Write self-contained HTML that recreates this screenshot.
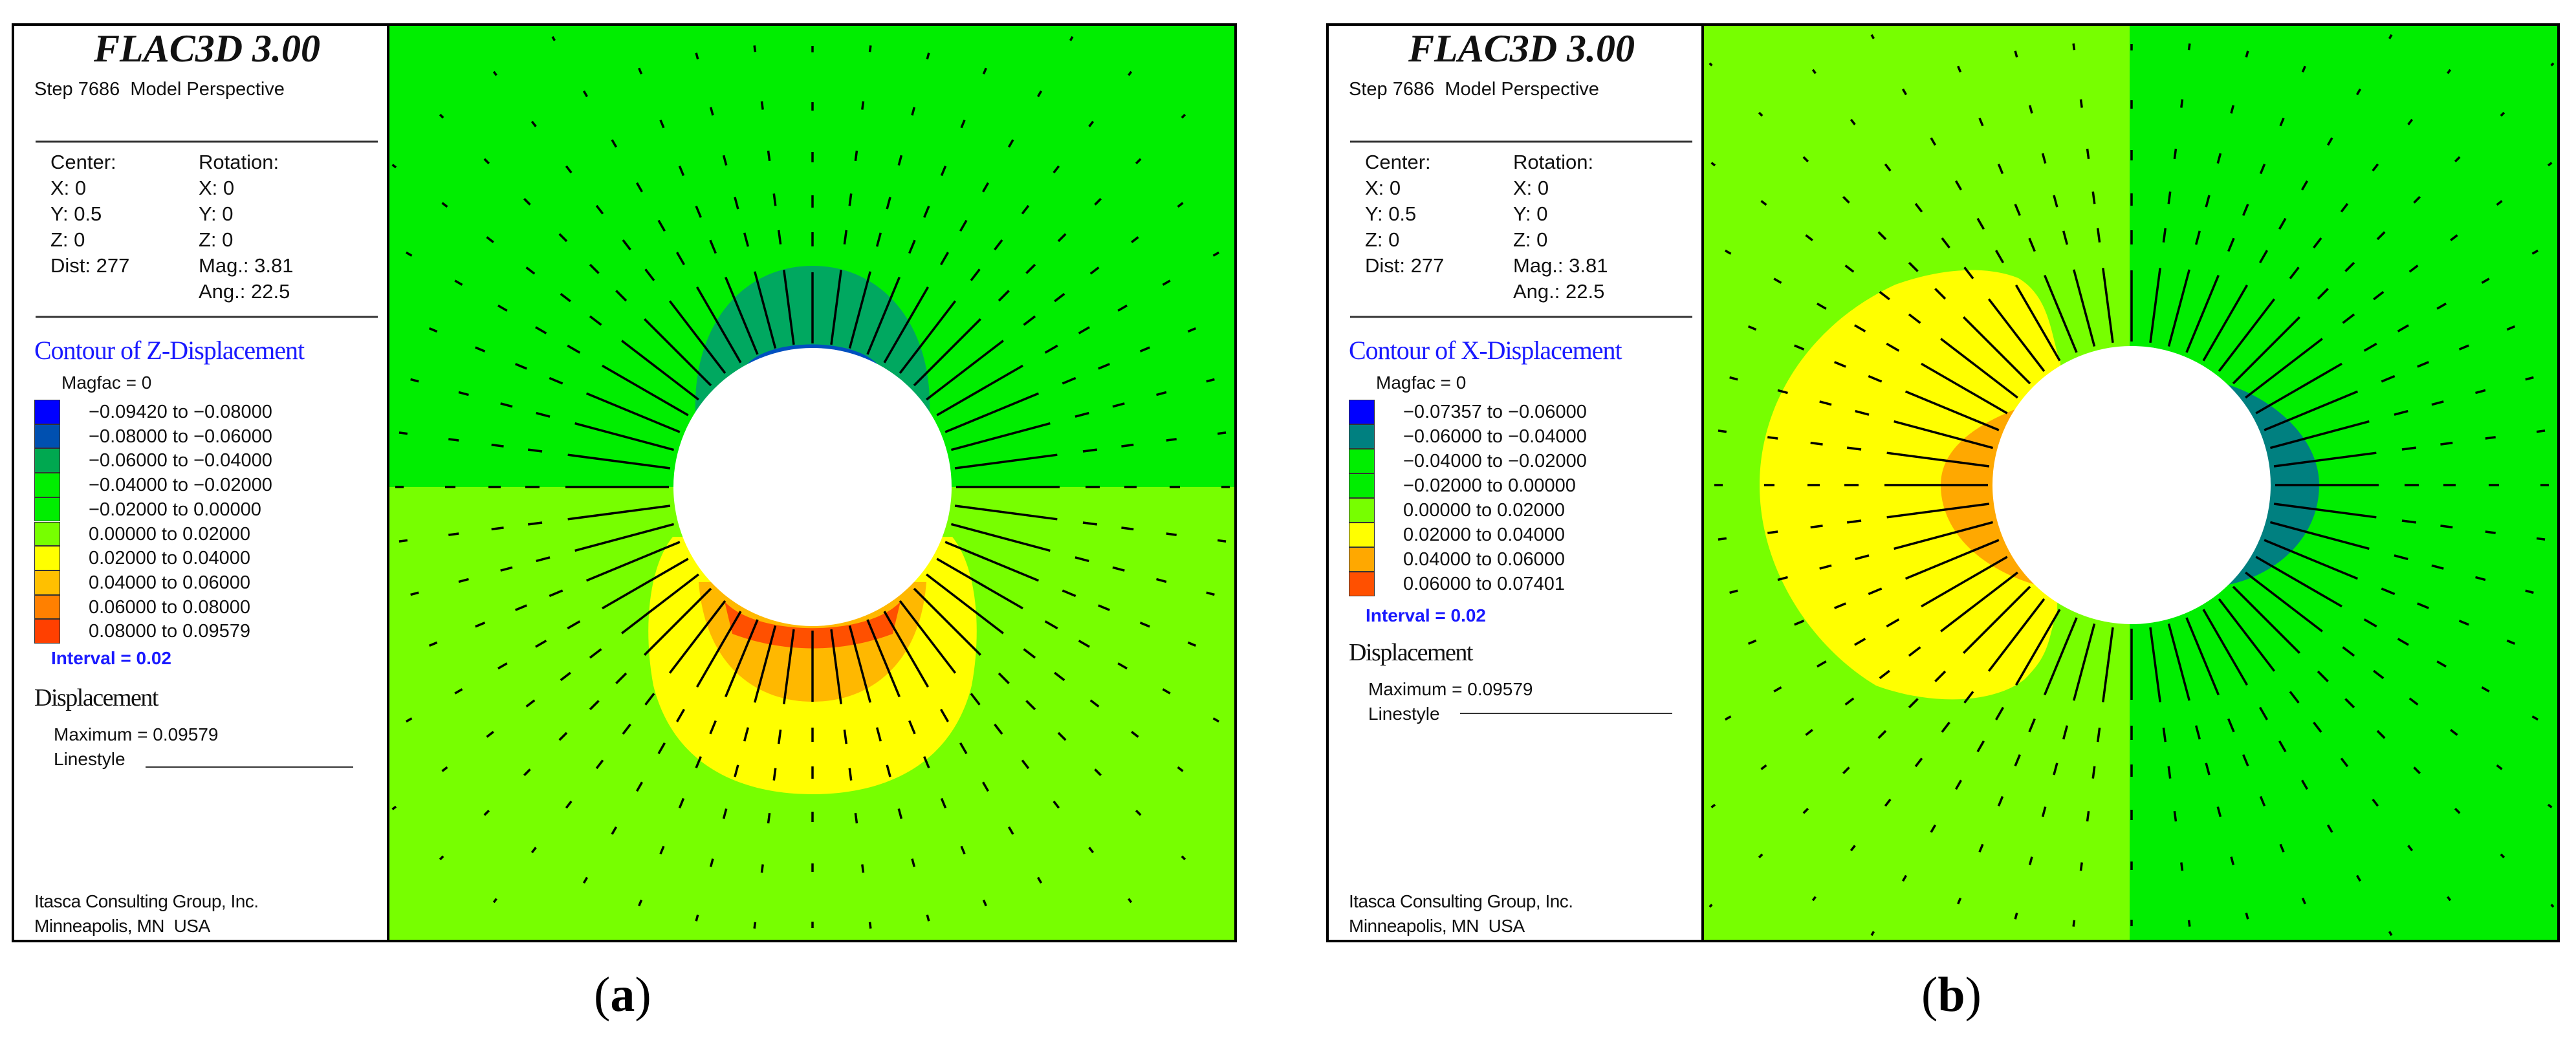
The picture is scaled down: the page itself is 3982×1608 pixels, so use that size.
<!DOCTYPE html>
<html><head><meta charset="utf-8"><style>
html,body{margin:0;padding:0;background:#fff;width:3982px;height:1608px;overflow:hidden;}
body{position:relative;font-family:"Liberation Sans",sans-serif;}
svg{display:block;}
.t{position:absolute;white-space:nowrap;color:#111;line-height:1;}
.cap{position:absolute;font-family:"Liberation Serif",serif;font-size:76px;line-height:1;top:1500px;}
</style></head><body>
<svg id="sv" width="3982" height="1608" style="position:absolute;left:0;top:0">
<defs>
<clipPath id="ca"><rect x="600" y="38" width="1310" height="1417"/></clipPath>
<clipPath id="cb"><rect x="2632" y="38" width="1323" height="1417"/></clipPath>
</defs>
<g clip-path="url(#ca)">
<rect x="600" y="38" width="1310" height="715" fill="#00ee00"/>
<rect x="600" y="753" width="1310" height="702" fill="#77ff00"/>
<path d="M1075 640 C1070 500 1150 411 1256 411 C1362 411 1442 500 1437 640 Z" fill="#00a860"/>
<path d="M1150 570 C1180 520 1330 520 1362 570 L1256 545 Z" fill="#0050c0"/>
<path d="M1040 830 C1000 880 995 980 1010 1060 C1040 1180 1140 1228 1256 1228 C1372 1228 1472 1180 1502 1060 C1517 980 1512 880 1472 830 Z" fill="#ffff00"/>
<path d="M1080 900 C1090 1030 1170 1085 1256 1085 C1342 1085 1422 1030 1432 900 Z" fill="#ffb800"/>
<path d="M1120 930 C1170 985 1342 985 1392 930 L1380 980 C1300 1010 1212 1010 1132 980 Z" fill="#ff5000"/>
<circle cx="1256" cy="753" r="215" fill="#fff"/>
<g id="arA"></g>
</g>
<rect x="20" y="38" width="1890" height="1417" fill="none" stroke="#000" stroke-width="4"/>
<line x1="600" y1="38" x2="600" y2="1455" stroke="#000" stroke-width="4"/>
<g clip-path="url(#cb)">
<rect x="2632" y="38" width="660" height="1417" fill="#77ff00"/>
<rect x="3292" y="38" width="663" height="1417" fill="#00ee00"/>
<path d="M3185 560 C3170 520 3170 460 3120 430 C3070 410 3000 415 2930 440 C2800 500 2720 620 2720 750 C2720 880 2800 1000 2900 1060 C2980 1090 3080 1090 3130 1050 C3170 1010 3165 990 3180 945 Z" fill="#ffff00"/>
<path d="M3150 620 C3060 650 3000 690 3000 750 C3000 820 3060 880 3150 905 L3100 750 Z" fill="#ffa800"/>
<path d="M3445 595 C3520 620 3585 680 3585 750 C3585 830 3520 890 3440 905 L3380 800 Z" fill="#008080"/>
<circle cx="3295" cy="750" r="215" fill="#fff"/>
<g id="arB"></g>
</g>
<rect x="2052" y="38" width="1903" height="1417" fill="none" stroke="#000" stroke-width="4"/>
<line x1="2632" y1="38" x2="2632" y2="1455" stroke="#000" stroke-width="4"/>
<line x1="55" y1="219" x2="584" y2="219" stroke="#333" stroke-width="3"/>
<line x1="55" y1="490" x2="584" y2="490" stroke="#333" stroke-width="3"/>
<line x1="225" y1="1186" x2="546" y2="1186" stroke="#333" stroke-width="2"/>
<line x1="2087" y1="219" x2="2616" y2="219" stroke="#333" stroke-width="3"/>
<line x1="2087" y1="490" x2="2616" y2="490" stroke="#333" stroke-width="3"/>
<line x1="2257" y1="1103" x2="2585" y2="1103" stroke="#333" stroke-width="2"/>
</svg>
<div id="la"></div>
<div id="lb"></div>
<div class="cap" style="left:918px">(<b>a</b>)</div>
<div class="cap" style="left:2970px">(<b>b</b>)</div>
<script>
function arrows(id,cx,cy,x0,x1){
 var g=document.getElementById(id),h='';
 function ok(x,y){return x>x0+6&&x<x1-6&&y>44&&y<1449;}
 for(var a=0;a<360;a+=7.5){var r=a*Math.PI/180,c=Math.cos(r),s=Math.sin(r);
  var L=110+50*Math.abs(c);
  h+='<line x1="'+(cx+c*222)+'" y1="'+(cy+s*222)+'" x2="'+(cx+c*(222+L))+'" y2="'+(cy+s*(222+L))+'" stroke="#000" stroke-width="3.5"/>';
  var R0=222+L+40,rings=[0,60,130,210,300,400,510,630];
  for(var i=0;i<rings.length;i++){var R=R0+rings[i],l=Math.max(5,22-i*3);
   var ax=cx+c*R,ay=cy+s*R,bx=cx+c*(R+l),by=cy+s*(R+l);
   if(ok(ax,ay)&&ok(bx,by))
   h+='<line x1="'+ax+'" y1="'+ay+'" x2="'+bx+'" y2="'+by+'" stroke="#000" stroke-width="3.5"/>';}
 }
 g.innerHTML=h;
}
arrows('arA',1256,753,600,1910);arrows('arB',3295,750,2632,3955);
function legend(id,dx,title,rows,cols,rh,intY,dispY){
 var h='';
 function t(x,y,txt,st){h+='<div class="t" style="left:'+(x+dx)+'px;top:'+y+'px;'+st+'">'+txt+'</div>';}
 t(145,45,'FLAC3D 3.00','font-family:Liberation Serif,serif;font-weight:bold;font-style:italic;font-size:60px;');
 t(53,124,'Step 7686&nbsp; Model Perspective','font-size:29px;');
 var L=['Center:','X: 0','Y: 0.5','Z: 0','Dist: 277'],R=['Rotation:','X: 0','Y: 0','Z: 0','Mag.: 3.81','Ang.: 22.5'];
 for(var i=0;i<L.length;i++)t(78,235+i*40,L[i],'font-size:31px;');
 for(var i=0;i<R.length;i++)t(307,235+i*40,R[i],'font-size:31px;');
 t(53,522,title,'font-family:Liberation Serif,serif;font-size:40px;color:#1a1aff;letter-spacing:-1px;');
 t(95,578,'Magfac = 0','font-size:28px;');
 for(var i=0;i<rows.length;i++){
  h+='<div style="position:absolute;left:'+(53+dx)+'px;top:'+(618+i*rh)+'px;width:40px;height:'+rh+'px;background:'+cols[i]+';box-shadow:inset 0 0 0 1px #333"></div>';
  t(137,618+i*rh+5,rows[i],'font-size:29px;');
 }
 t(79,intY,'Interval = 0.02','font-size:28px;color:#1a1aff;font-weight:bold;');
 t(53,dispY,'Displacement','font-family:Liberation Serif,serif;font-size:38px;letter-spacing:-1.5px;');
 t(83,dispY+62,'Maximum = 0.09579','font-size:28px;');
 t(83,dispY+100,'Linestyle','font-size:28px;');
 t(53,1380,'Itasca Consulting Group, Inc.','font-size:28px;letter-spacing:-0.5px;');
 t(53,1418,'Minneapolis, MN&nbsp; USA','font-size:28px;letter-spacing:-0.5px;');
 document.getElementById(id).innerHTML=h;
}
legend('la',0,'Contour of Z-Displacement',
 ['&minus;0.09420 to &minus;0.08000','&minus;0.08000 to &minus;0.06000','&minus;0.06000 to &minus;0.04000','&minus;0.04000 to &minus;0.02000','&minus;0.02000 to 0.00000','0.00000 to 0.02000','0.02000 to 0.04000','0.04000 to 0.06000','0.06000 to 0.08000','0.08000 to 0.09579'],
 ['#0000ff','#0050b0','#00a850','#00ee00','#00ee00','#77ff00','#ffff00','#ffc000','#ff8000','#ff4000'],37.7,1004,1060);
legend('lb',2032,'Contour of X-Displacement',
 ['&minus;0.07357 to &minus;0.06000','&minus;0.06000 to &minus;0.04000','&minus;0.04000 to &minus;0.02000','&minus;0.02000 to 0.00000','0.00000 to 0.02000','0.02000 to 0.04000','0.04000 to 0.06000','0.06000 to 0.07401'],
 ['#0000ff','#008080','#00ee00','#00ee00','#77ff00','#ffff00','#ffa800','#ff5000'],38,938,990);
</script>
</body></html>
